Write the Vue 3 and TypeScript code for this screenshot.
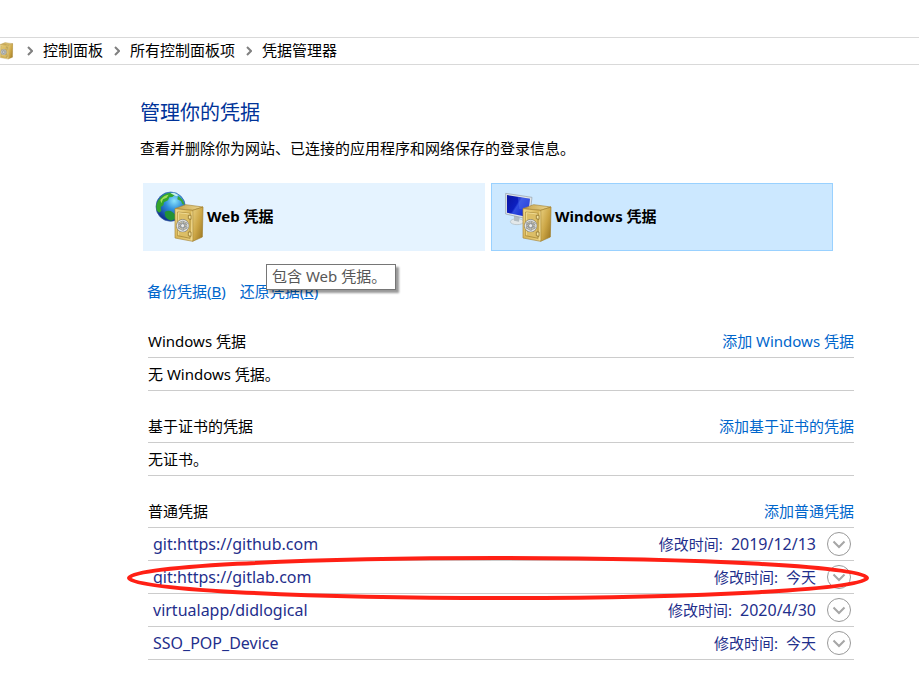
<script setup lang="ts">
interface Credential {
  name: string
  modified: string
  marked?: boolean
}

interface Section {
  title: string
  action: string
  empty?: string
  items: Credential[]
}

const crumbs: string[] = ['控制面板', '所有控制面板项', '凭据管理器']

const sections: Section[] = [
  { title: 'Windows 凭据', action: '添加 Windows 凭据', empty: '无 Windows 凭据。', items: [] },
  { title: '基于证书的凭据', action: '添加基于证书的凭据', empty: '无证书。', items: [] },
  {
    title: '普通凭据',
    action: '添加普通凭据',
    items: [
      { name: 'git:https://github.com', modified: '2019/12/13' },
      { name: 'git:https://gitlab.com', modified: '今天', marked: true },
      { name: 'virtualapp/didlogical', modified: '2020/4/30' },
      { name: 'SSO_POP_Device', modified: '今天' },
    ],
  },
]

const isNumeric = (value: string): boolean => /^\d/.test(value)
</script>

<template>
  <div class="page">
    <svg class="defs" aria-hidden="true">
      <defs>
        <linearGradient id="front" x1="0" y1="0" x2="1" y2="1">
          <stop offset="0" stop-color="#f3dc8f" />
          <stop offset="0.5" stop-color="#d8b658" />
          <stop offset="1" stop-color="#ecd385" />
        </linearGradient>
        <linearGradient id="side" x1="0" y1="0" x2="1" y2="1">
          <stop offset="0" stop-color="#e9d080" />
          <stop offset="0.5" stop-color="#cca646" />
          <stop offset="1" stop-color="#97721e" />
        </linearGradient>
        <linearGradient id="roof" x1="0" y1="0" x2="1" y2="0">
          <stop offset="0" stop-color="#c5a34c" />
          <stop offset="1" stop-color="#ecd792" />
        </linearGradient>
        <radialGradient id="ocean" cx="0.62" cy="0.3" r="0.75">
          <stop offset="0" stop-color="#8ce4fb" />
          <stop offset="0.4" stop-color="#2f8fdc" />
          <stop offset="1" stop-color="#0b2687" />
        </radialGradient>
        <linearGradient id="screen" x1="0" y1="0" x2="1" y2="0.6">
          <stop offset="0" stop-color="#0a15a0" />
          <stop offset="0.48" stop-color="#0c1fc0" />
          <stop offset="0.55" stop-color="#2f4ce0" />
          <stop offset="1" stop-color="#1027cf" />
        </linearGradient>
        <symbol id="safe" viewBox="72 46 90 120">
          <path d="M75 62 107 50l52 7-31 10z" fill="url(#roof)" stroke="#a98736" stroke-width="2" stroke-linejoin="round" />
          <path d="M128 67l31-10-2 90-29 13z" fill="url(#side)" stroke="#a07d2b" stroke-width="2" stroke-linejoin="round" />
          <path d="M75 62l53 5v93l-53-10z" fill="url(#front)" stroke="#a98736" stroke-width="2" stroke-linejoin="round" />
          <path d="M83 72l37 4v75l-37-8z" fill="#dcbe66" stroke="#9c7b2c" stroke-width="2" />
          <path d="M85 142V74l34 4M126 70v87" fill="none" stroke="#fff0b0" stroke-width="2" />
          <path d="M115 82h8v12l-8-2zM115 132h8v13l-8-2z" fill="#f4e4a0" stroke="#80611d" stroke-width="2" />
          <circle cx="98" cy="113" r="20" fill="#a99257" />
          <circle cx="98" cy="113" r="16" fill="#c3bda9" stroke="#8b8e8d" stroke-width="6" />
          <circle cx="98" cy="113" r="16" fill="none" stroke="#e2e4e4" stroke-width="4" />
          <path d="M98 98v30M84 105l28 16M84 121l28-16" stroke="#7b8082" stroke-width="5" />
          <path d="M98 98v30M84 105l28 16M84 121l28-16" stroke="#e1e3e5" stroke-width="2" />
          <circle cx="98" cy="113" r="6" fill="#e9ebec" stroke="#777b7e" stroke-width="2" />
        </symbol>
      </defs>
    </svg>

    <nav class="crumbs" aria-label="地址">
      <svg class="crumb-icon" viewBox="78 46 84 120" aria-hidden="true">
        <use href="#safe" x="72" y="46" width="90" height="120" />
      </svg>
      <template v-for="crumb in crumbs" :key="crumb">
        <svg class="sep" viewBox="0 0 6 10" aria-hidden="true"><path d="M1 1l4 4-4 4" /></svg>
        <a href="#">{{ crumb }}</a>
      </template>
    </nav>

    <main>
      <h1>管理你的凭据</h1>
      <p class="intro">查看并删除你为网站、已连接的应用程序和网络保存的登录信息。</p>

      <div class="cards">
        <button type="button" class="card">
          <svg viewBox="0 0 171 180" aria-hidden="true">
            <circle cx="62" cy="56" r="44" fill="url(#ocean)" stroke="#3a62a8" stroke-width="2" />
            <path d="M25 37Q38 16 61 14q11 0 15 5l-9 8-9 1-4 9-12 6-2 9-8 5 2 12-7 5-7-7q-4-17 5-30z" fill="#35a52c" />
            <path d="M31 36q11-15 25-16l-6 9-11 5-5 12z" fill="#a2df5b" />
            <path d="M84 24q17 10 20 27l-7-3-4-9-11-5z" fill="#3aa53a" />
            <path d="M44 72q13-7 23 0l9 8 1 12-14 6q-12-3-17-12z" fill="#229237" />
            <path d="M61 16l11-2 14 8-7 3z" fill="#c8f1e5" />
            <use href="#safe" x="72" y="46" width="90" height="120" />
          </svg>
          <span>Web 凭据</span>
        </button>
        <button type="button" class="card selected">
          <svg viewBox="0 0 171 180" aria-hidden="true">
            <ellipse cx="57" cy="101" rx="20" ry="9" fill="#e3e8ea" stroke="#aeb8bd" stroke-width="2" />
            <path d="M48 82l17 3-2 16-15-3z" fill="#b2bcc1" />
            <path d="M23 16l79 12-8 66-71-16z" fill="#dfe4e8" stroke="#929da8" stroke-width="2" stroke-linejoin="round" />
            <path d="M27 21l69 11-7 55-62-13z" fill="url(#screen)" />
            <path d="M59 26l37 6-4 29q-14 5-28 2z" fill="#5f7af1" opacity="0.35" />
            <use href="#safe" x="72" y="46" width="90" height="120" />
          </svg>
          <span>Windows 凭据</span>
        </button>
        <div class="tooltip" role="tooltip">包含 Web 凭据。</div>
      </div>

      <div class="actions">
        <a href="#">备份凭据(<u>B</u>)</a>
        <a href="#">还原凭据(<u>R</u>)</a>
      </div>

      <section v-for="section in sections" :key="section.title">
        <header>
          <h2>{{ section.title }}</h2>
          <a href="#">{{ section.action }}</a>
        </header>
        <p v-if="section.empty" class="row">{{ section.empty }}</p>
        <ul v-else>
          <li v-for="item in section.items" :key="item.name" class="row item">
            <span class="name">{{ item.name }}</span>
            <span>修改时间:</span>
            <span :class="{ numeric: isNumeric(item.modified) }">{{ item.modified }}</span>
            <button type="button" class="expand" :aria-label="'展开 ' + item.name">
              <svg viewBox="0 0 26 26" aria-hidden="true">
                <circle cx="13" cy="13" r="11.500" />
                <path d="M7.500 10.500l5.500 5.500 5.500-5.500" />
              </svg>
            </button>
            <svg v-if="item.marked" class="mark" viewBox="0 0 744 44" preserveAspectRatio="none" aria-hidden="true">
              <ellipse cx="372" cy="22" rx="369" ry="20" />
            </svg>
          </li>
        </ul>
      </section>
    </main>
  </div>
</template>

<style>
body {
  margin: 0;
  background: #fff;
}
</style>

<style scoped>
.page {
  padding-top: 37px;
  font-family: "Noto Sans", "Noto Sans CJK SC", sans-serif;
  font-size: 15px;
  line-height: 20px;
  color: #000;
}

.defs {
  position: absolute;
  width: 0;
  height: 0;
}

a {
  color: #0066cc;
  text-decoration: none;
}

button {
  font: inherit;
  color: inherit;
  cursor: pointer;
}

h1,
h2,
p,
ul {
  margin: 0;
  padding: 0;
  font-weight: 400;
}

.crumbs {
  display: flex;
  align-items: center;
  height: 26px;
  border: solid #d9d9d9;
  border-width: 1px 0;
}

.crumbs a {
  padding-bottom: 2px;
  color: #000;
}

.crumb-icon {
  width: 14px;
  height: 18px;
}

.sep {
  width: 6px;
  height: 10px;
  margin: 0 10px 0 11px;
  fill: none;
  stroke: #808080;
  stroke-width: 2;
}

.crumb-icon + .sep {
  margin-left: 13px;
}

main {
  padding: 33px 65px 24px 140px;
}

h1 {
  font-size: 20px;
  line-height: 30px;
  color: #003399;
}

.intro {
  margin-top: 10px;
}

.cards {
  position: relative;
  display: grid;
  grid-template-columns: 1fr 1fr;
  gap: 6px;
  margin: 25px 21px 0 3px;
}

.card {
  display: flex;
  align-items: center;
  padding: 4px 6px 2px;
  border: 1px solid #e5f3ff;
  background: #e5f3ff;
  font-weight: 700;
}

.card.selected {
  border-color: #99d1ff;
  background: #cce8ff;
}

.card svg {
  width: 57px;
  height: 60px;
}

.card span {
  padding-bottom: 4px;
}

.tooltip {
  position: absolute;
  top: 81px;
  left: 123px;
  padding: 1px 9px 3px 5px;
  border: 1px solid #767676;
  background: #fff;
  box-shadow: 3px 3px 2px rgba(0, 0, 0, 0.4);
  color: #575757;
  white-space: nowrap;
}

.actions {
  display: flex;
  gap: 14px;
  padding: 30px 0 5px 7px;
}

section {
  margin-left: 8px;
  padding-top: 19px;
}

header,
.row {
  display: flex;
  align-items: center;
  height: 32px;
  border-bottom: 1px solid #cccccc;
}

header {
  justify-content: space-between;
}

h2 {
  font-size: 15px;
}

ul {
  list-style: none;
}

.item {
  position: relative;
  gap: 8px;
  padding: 0 2px 0 5px;
  color: #1f2f8c;
}

.name {
  flex: 1;
}

.name,
.numeric {
  font-size: 16px;
}

.expand {
  display: flex;
  margin-left: 2px;
  padding: 0;
  border: 0;
  background: none;
}

.expand svg {
  width: 26px;
  height: 26px;
  fill: none;
  stroke: #999;
  stroke-width: 1;
}

.expand path {
  stroke: #a6a6a6;
  stroke-width: 2;
}

.mark {
  position: absolute;
  top: -5px;
  left: -22px;
  width: calc(100% + 38px);
  height: 44px;
  fill: none;
  stroke: #ff2015;
  stroke-width: 4;
  pointer-events: none;
}
</style>
